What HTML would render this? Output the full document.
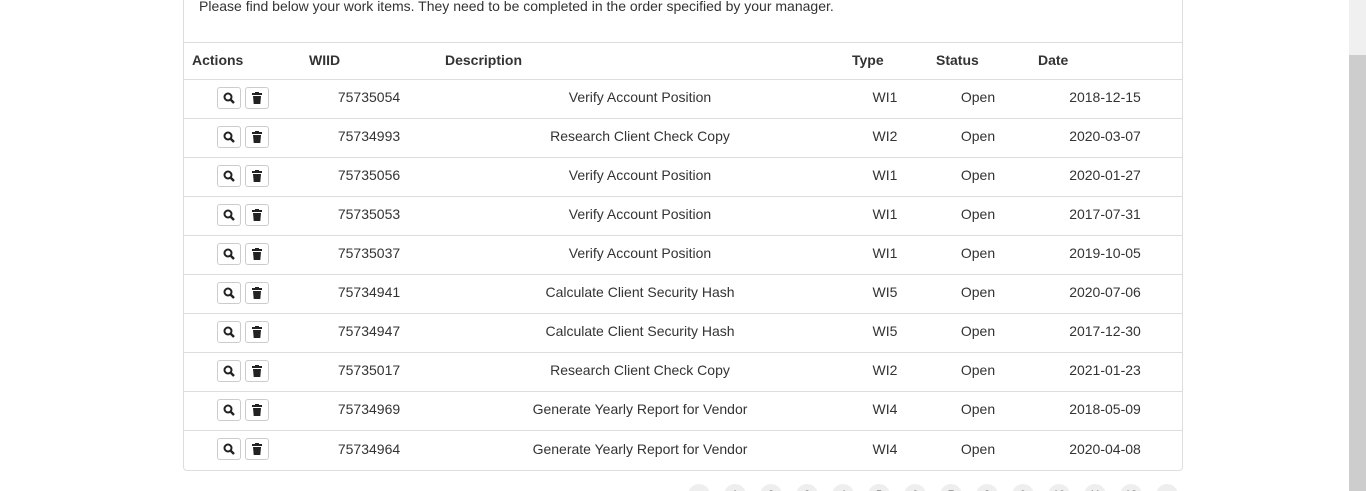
<!DOCTYPE html>
<html><head><style>
html,body{margin:0;width:1366px;height:491px;overflow:hidden}
body{background:#fff;font-family:"Liberation Sans",sans-serif;font-size:14px;color:#333;position:relative}
.card{position:absolute;left:183px;top:-10px;width:998px;height:479px;border:1px solid #ddd;border-radius:4px}
.intro{position:absolute;left:199px;top:-2px}
.hl{position:absolute;left:184px;width:998px;height:1px;background:#ddd}
.t{position:absolute;white-space:nowrap}
.h{font-weight:bold}
.c{transform:translateX(-50%)}
.btn{position:absolute;width:22px;height:20px;border:1px solid #ccc;border-radius:3px;background:#fff}
.btn svg{position:absolute;left:5px;top:4px}
.sb{position:absolute;left:1349px;top:0;width:17px;height:491px;background:#f0f0f0}
.th{position:absolute;left:1349px;top:55px;width:17px;height:436px;background:#cdcdcd}
.pg{position:absolute;top:484px;width:22px;height:22px;border-radius:50%;background:#eee;font-size:11px;color:#555;text-align:center;line-height:22px}
</style></head><body>
<div class="card"></div>
<div class="t intro">Please find below your work items. They need to be completed in the order specified by your manager.</div>
<div class="hl" style="top:42px"></div>
<div class="t h" style="left:192px;top:52px">Actions</div>
<div class="t h" style="left:309px;top:52px">WIID</div>
<div class="t h" style="left:445px;top:52px">Description</div>
<div class="t h" style="left:852px;top:52px">Type</div>
<div class="t h" style="left:936px;top:52px">Status</div>
<div class="t h" style="left:1038px;top:52px">Date</div>
<div id="rows"></div>
<div class="sb"></div><div class="th"></div>
<script>
var d=[["75735054","Verify Account Position","WI1","2018-12-15"],["75734993","Research Client Check Copy","WI2","2020-03-07"],["75735056","Verify Account Position","WI1","2020-01-27"],["75735053","Verify Account Position","WI1","2017-07-31"],["75735037","Verify Account Position","WI1","2019-10-05"],["75734941","Calculate Client Security Hash","WI5","2020-07-06"],["75734947","Calculate Client Security Hash","WI5","2017-12-30"],["75735017","Research Client Check Copy","WI2","2021-01-23"],["75734969","Generate Yearly Report for Vendor","WI4","2018-05-09"],["75734964","Generate Yearly Report for Vendor","WI4","2020-04-08"]];
var h="";
d.forEach(function(r,i){var y=79+i*39;var ty=y+10+(i==9?1:0);
h+='<div class="hl" style="top:'+y+'px"></div>';
h+='<div class="btn" style="left:217px;top:'+(y+8)+'px"><svg width="12" height="12" viewBox="0 0 12 12"><circle cx="5" cy="5" r="3.5" fill="none" stroke="#222" stroke-width="2"/><path d="M7.5 7.5L11 11" stroke="#222" stroke-width="2.4"/></svg></div>';
h+='<div class="btn" style="left:245px;top:'+(y+8)+'px"><svg width="12" height="12" viewBox="0 0 12 12"><rect x="1" y="1" width="10" height="2" fill="#222"/><rect x="4" y="0" width="4" height="1.5" fill="#222"/><path d="M2 4H10L9.3 12H2.7Z" fill="#222"/></svg></div>';
h+='<div class="t c" style="left:369px;top:'+ty+'px">'+r[0]+'</div>';
h+='<div class="t c" style="left:640px;top:'+ty+'px">'+r[1]+'</div>';
h+='<div class="t c" style="left:885px;top:'+ty+'px">'+r[2]+'</div>';
h+='<div class="t c" style="left:978px;top:'+ty+'px">Open</div>';
h+='<div class="t c" style="left:1105px;top:'+ty+'px">'+r[3]+'</div>';});
var p=["‹","1","2","3","4","5","6","7","8","9","10","11","12","›"];
p.forEach(function(s,i){h+='<div class="pg" style="left:'+(688+i*36)+'px">'+s+'</div>';});
document.getElementById("rows").innerHTML=h;
</script>
</body></html>
